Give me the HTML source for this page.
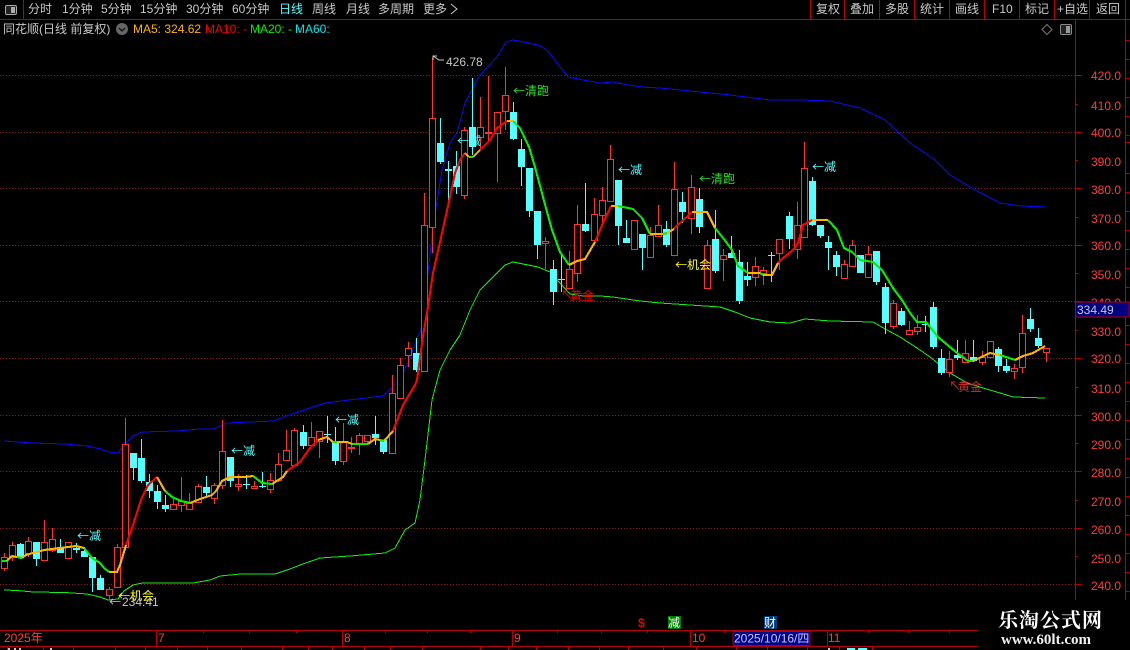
<!DOCTYPE html>
<html lang="zh">
<head>
<meta charset="utf-8">
<title>K线图</title>
<style>
html,body{margin:0;padding:0;background:#000;width:1130px;height:650px;overflow:hidden}
svg{display:block}
text{font-family:"Liberation Sans","WenQuanYi Zen Hei","Noto Sans CJK SC",sans-serif;font-size:12px}
.t{fill:#c8c8c8}
.a{fill:#ff3c3c}
.c{fill:#54ffff}
.g{fill:#2fe02f}
.y{fill:#ffff00}
.s text,text.s{font-family:"Noto Sans CJK SC","WenQuanYi Zen Hei",sans-serif}
</style>
</head>
<body>
<svg width="1130" height="650" viewBox="0 0 1130 650" xmlns="http://www.w3.org/2000/svg">
<rect width="1130" height="650" fill="#000"/>

<!-- grid -->
<path shape-rendering="crispEdges" stroke="#8c1818" stroke-dasharray="1 2" fill="none" d="M0 75.5H1075M0 132.5H1075M0 188.5H1075M0 245.5H1075M0 301.5H1075M0 358.5H1075M0 415.5H1075M0 471.5H1075M0 528.5H1075M0 584.5H1075"/>

<!-- frame lines -->
<path shape-rendering="crispEdges" stroke="#b80000" fill="none" d="M0 19.5H1130M23.5 0V19M810.5 0V19M844.5 0V19M879.5 0V19M914.5 0V19M949.5 0V19M984.5 0V19M1019.5 0V19M1054.5 0V19M1089.5 0V19M1125.5 0V19M1075.5 20V630M1125.5 20V630
M1075 75.5h6M1075 132.5h6M1075 188.5h6M1075 245.5h6M1075 301.5h6M1075 358.5h6M1075 415.5h6M1075 471.5h6M1075 528.5h6M1075 584.5h6
M1075 104.5h3M1075 160.5h3M1075 217.5h3M1075 273.5h3M1075 330.5h3M1075 387.5h3M1075 443.5h3M1075 500.5h3M1075 556.5h3
M1125 40.5h4M1125 59.5h4M1125 78.5h4M1125 97.5h4M1125 116.5h4M1125 135.5h4M1125 142.5h5M1125 173.5h4M1125 192.5h4M1125 211.5h4M1125 230.5h4M1125 249.5h4M1125 268.5h4M1125 287.5h4M1125 306.5h4M1125 325.5h4M1125 344.5h4M1125 363.5h4M1125 382.5h4M1125 401.5h4M1125 420.5h4M1125 439.5h4M1125 458.5h4M1125 477.5h4M1125 496.5h4M1125 515.5h4M1125 534.5h4M1125 553.5h4M1125 572.5h4M1125 591.5h4
M0 630.5H978M0 646.5H978M156.5 630V646M342.5 630V646M512.5 630V646M690.5 630V646M827.5 630V646
M203.5 630v3M249.5 630v3M296.5 630v3M385.5 630v3M427.5 630v3M470.5 630v3M557.5 630v3M601.5 630v3M647.5 630v3M724.5 630v3M868.5 630v3M908.5 630v3M949.5 630v3
M7.5 646v4M43.5 646v4M73.5 646v4M115.5 646v4M145.5 646v4M177.5 646v4M207.5 646v4M241.5 646v4M282.5 646v4M308.5 646v4M332.5 646v4M364.5 646v4M390.5 646v4M422.5 646v4M480.5 646v4M508.5 646v4M536.5 646v4M568.5 646v4M599.5 646v4M628.5 646v4M663.5 646v4M696.5 646v4M736.5 646v4M767.5 646v4M807.5 646v4M839.5 646v4M872.5 646v4"/>

<!-- bands -->
<polyline shape-rendering="crispEdges" fill="none" stroke="#0a0af0" points="4,441 17,442 33,443 65,444 87,446 100,449 108,452 118,453 124,445 133,436 142,432 177,431 200,429 213,429 227,423 273,421 295,413 325,403 357,399 383,396 400,380 410,358 417,338 421,330 428,273 433,227 442,170 450,143 457,133 465,103 480,75 497,57 506,42 513,40 523,42 538,45 547,50 557,63 568,77 583,80 600,83 613,82 640,87 660,88 690,91 730,95 770,100 800,100 830,101 860,108 885,120 910,143 935,160 950,175 975,190 1000,203 1020,206 1045,207"/>
<polyline shape-rendering="crispEdges" fill="none" stroke="#10f010" points="4,590 17,590.5 33,592 65,592.5 87,594 100,597 108,600 118,599 124,591 133,585 142,583 193,583 210,580 220,576 240,574 275,574 290,569 300,565 320,558 350,556 385,553 395,548 405,530 415,523 420,500 425,460 432,400 440,370 450,350 460,335 470,310 480,290 497,273 505,265 513,262 523,264 538,267 550,272 560,283 570,294 583,296 600,296 613,297 640,301 660,303 690,305 720,307 735,312 750,318 770,322 790,323 805,319 830,321 873,322 887,330 900,337 917,348 930,357 950,373 967,383 983,388 1000,393 1013,397 1045,398"/>

<!-- red candle wicks -->
<path shape-rendering="crispEdges" fill="none" stroke="#ff3232" d="M4.5 553V571M12.5 542V561M28.5 537V557M44.5 520V560M52.5 528V552M109.5 587V600M117.5 544V588M125.5 418V550M173.5 499V509M181.5 477V512M189.5 493V509M198.5 484V502M214.5 483V504M222.5 420V489M238.5 474V491M254.5 481V489M270.5 473V493M278.5 453V482M286.5 430V460M294.5 428V465M311.5 422V445M319.5 431V458M343.5 423V465M351.5 437V453M359.5 433V455M367.5 435V445M392.5 375V453M400.5 358V398M408.5 342V367M424.5 193V371M432.5 58V253M464.5 127V199M480.5 97V150M488.5 76V142M497.5 112V182M505.5 67V130M545.5 237V269M569.5 251V288M577.5 205V282M594.5 198V240M602.5 187V225M610.5 145V201M634.5 220V249M650.5 227V257M658.5 205V236M674.5 162V255M691.5 175V234M707.5 240V288M723.5 249V281M755.5 257V286M763.5 267V285M779.5 239V270M797.5 202V259M804.5 142V237M844.5 260V278M852.5 240V267M868.5 246V277M893.5 300V329M909.5 321V335M917.5 315V335M949.5 351V377M965.5 340V363M982.5 351V365M990.5 341V357M1014.5 364V379M1022.5 315V373M1046.5 348V362"/>

<!-- cyan candle wicks -->
<path shape-rendering="crispEdges" fill="none" stroke="#54ffff" d="M20.5 543V559M36.5 542V566M60.5 539V553M76.5 543V553M84.5 547V557M92.5 557V592M100.5 575V590M133.5 453V480M141.5 439V483M149.5 474V498M157.5 485V509M165.5 495V512M206.5 476V496M230.5 457V487M246.5 475V489M262.5 472V488M303.5 425V449M327.5 416V443M335.5 427V465M375.5 416V445M383.5 440V454M416.5 338V372M440.5 118V164M448.5 161V200M456.5 151V194M472.5 78V155M513.5 102V140M521.5 139V186M529.5 168V217M537.5 211V259M553.5 260V305M561.5 254V292M585.5 183V232M618.5 180V245M626.5 220V243M642.5 234V270M666.5 221V247M682.5 192V223M699.5 188V233M715.5 210V273M731.5 236V258M739.5 250V304M747.5 262V286M771.5 252V282M789.5 212V249M812.5 177V226M820.5 225V238M828.5 236V270M836.5 251V276M876.5 251V285M885.5 283V334M901.5 308V326M925.5 316V332M933.5 302V349M941.5 349V375M957.5 340V360M973.5 340V362M998.5 347V372M1006.5 359V373M1030.5 308V332M1038.5 328V348"/>

<!-- cyan bodies -->
<path shape-rendering="crispEdges" fill="#54ffff" d="M17 544h7v14h-7zM33 542h7v17h-7zM57 547h7v6h-7zM73 548h7v2h-7zM81 551h7v6h-7zM89 557h7v21h-7zM97 578h7v12h-7zM130 453h7v15h-7zM138 458h7v23h-7zM146 482h7v9h-7zM154 491h7v11h-7zM162 505h7v4h-7zM203 487h7v6h-7zM227 457h7v24h-7zM243 484h7v1h-7zM259 486h7v1h-7zM300 432h7v14h-7zM324 434h7v1h-7zM332 442h7v19h-7zM372 434h7v4h-7zM380 440h7v12h-7zM413 353h7v17h-7zM437 143h7v19h-7zM445 169h7v2h-7zM453 166h7v21h-7zM469 127h7v20h-7zM510 112h7v27h-7zM518 149h7v18h-7zM526 168h7v43h-7zM534 211h7v34h-7zM550 269h7v23h-7zM558 279h7v1h-7zM582 224h7v7h-7zM615 180h7v46h-7zM623 238h7v5h-7zM639 234h7v14h-7zM663 229h7v16h-7zM679 202h7v10h-7zM696 199h7v28h-7zM712 239h7v32h-7zM728 253h7v5h-7zM736 262h7v39h-7zM744 276h7v4h-7zM768 255h7v1h-7zM786 216h7v23h-7zM809 181h7v44h-7zM817 225h7v11h-7zM825 242h7v6h-7zM833 255h7v12h-7zM857 255h7v18h-7zM873 251h7v31h-7zM882 287h7v36h-7zM898 311h7v14h-7zM922 324h7v1h-7zM930 307h7v40h-7zM938 358h7v15h-7zM954 355h7v3h-7zM970 357h7v4h-7zM995 349h7v17h-7zM1003 366h7v5h-7zM1027 319h7v10h-7zM1035 338h7v8h-7z"/>

<!-- red bodies -->
<path shape-rendering="crispEdges" fill="#000" stroke="#ff3232" d="M1.5 557.5h6v11h-6zM9.5 545.5h6v12h-6zM25.5 541.5h6v12h-6zM41.5 542.5h6v18h-6zM49.5 539.5h6v11h-6zM65.5 542.5h6v16h-6zM106.5 589.5h6v6h-6zM114.5 547.5h6v40h-6zM122.5 444.5h6v103h-6zM170.5 504.5h6v5h-6zM178.5 501.5h6v4h-6zM186.5 503.5h6v6h-6zM195.5 486.5h6v16h-6zM211.5 485.5h6v13h-6zM219.5 451.5h6v34h-6zM235.5 484.5h6v2h-6zM251.5 486.5h6v2h-6zM267.5 480.5h6v9h-6zM275.5 464.5h6v16h-6zM283.5 450.5h6v10h-6zM291.5 430.5h6v35h-6zM308.5 437.5h6v8h-6zM316.5 431.5h6v10h-6zM340.5 442.5h6v19h-6zM348.5 447.5h6v1h-6zM356.5 435.5h6v9h-6zM364.5 435.5h6v6h-6zM389.5 393.5h6v60h-6zM397.5 365.5h6v33h-6zM405.5 348.5h6v7h-6zM421.5 225.5h6v146h-6zM429.5 118.5h6v109h-6zM461.5 130.5h6v65h-6zM477.5 127.5h6v10h-6zM485.5 132.5h6v1h-6zM494.5 112.5h6v21h-6zM502.5 95.5h6v16h-6zM542.5 241.5h6v2h-6zM566.5 269.5h6v19h-6zM574.5 224.5h6v49h-6zM591.5 214.5h6v26h-6zM599.5 200.5h6v15h-6zM607.5 159.5h6v42h-6zM631.5 220.5h6v29h-6zM647.5 235.5h6v22h-6zM655.5 225.5h6v11h-6zM671.5 189.5h6v66h-6zM688.5 187.5h6v31h-6zM704.5 245.5h6v43h-6zM720.5 255.5h6v4h-6zM752.5 266.5h6v11h-6zM760.5 270.5h6v3h-6zM776.5 239.5h6v14h-6zM794.5 225.5h6v24h-6zM801.5 168.5h6v69h-6zM841.5 264.5h6v14h-6zM849.5 245.5h6v21h-6zM865.5 254.5h6v23h-6zM890.5 303.5h6v23h-6zM906.5 330.5h6v4h-6zM914.5 327.5h6v4h-6zM946.5 359.5h6v13h-6zM962.5 353.5h6v9h-6zM979.5 357.5h6v5h-6zM987.5 341.5h6v16h-6zM1011.5 368.5h6v3h-6zM1019.5 333.5h6v34h-6zM1043.5 348.5h6v4h-6z"/>

<!-- MA line -->
<path shape-rendering="crispEdges" fill="none" stroke="#ff0000" stroke-width="2.1" d="M126 545L133 525 141 500 148 485 157 477M287 471L300 462 310 448 318 440M393 431L403 405 415 385 417 380 421 350 424 330 428 307 433 273 442 233 450 197 455 173 460 160 465 153M480 150L490 140 497 128 507 121M595 242L603 223 611 206M674 229L680 223 692 212M778 263L782 259 793 250 798 243 803 225 812 220"/>
<path shape-rendering="crispEdges" fill="none" stroke="#00f000" stroke-width="2.1" d="M2 561H7M17 557L22 558M84 548L92 558 100 563 104 568 109 572M165 491L172 497 181 501 190 503M253 476L262 483 272 484M333 442H337M352 444H368M380 440L384 441M469 157H473M513 121L520 128 529 147 535 167 543 197 552 230 560 252 569 265M618 206L633 209 642 218 650 234M663 234L667 233M715 228L723 238 732 250 738 266 748 273M760 273L763 275M828 220L837 230 844 248 852 252 860 260 873 262 882 270 893 288 902 300 910 313 917 322 926 322 938 337 957 353 968 361 973 361M1000 355L1015 360"/>
<path shape-rendering="crispEdges" fill="none" stroke="#ffb400" stroke-width="2.1" d="M7 561L12 556 17 557M22 558L26 555 33 553 37 552 44 550 52 549 60 548 68 547 76 546 84 548M109 572H117L120 565 126 545M157 477L165 491M190 503L200 499 212 495 216 491 222 481 230 477 245 477 253 476M272 484L283 477 287 471M318 440L327 437 333 442M337 442H347L352 444M368 444L375 439 380 440M384 441L393 431M465 153L469 157M473 157L480 150M507 121H513M569 265L577 261 585 259 595 242M611 206H618M650 234H663M667 233L674 229M692 212H707L715 228M748 273H760M763 275H772L778 263M812 220H828M973 361L990 353 1000 355M1015 360L1023 356 1033 353 1045 346"/>

<!-- top bar -->
<g class="t">
<text x="28" y="13">分时</text>
<text x="62" y="13">1分钟</text>
<text x="101" y="13">5分钟</text>
<text x="140" y="13">15分钟</text>
<text x="186" y="13">30分钟</text>
<text x="232" y="13">60分钟</text>
<text x="279" y="13" style="fill:#54ffff">日线</text>
<text x="312" y="13">周线</text>
<text x="346" y="13">月线</text>
<text x="378" y="13">多周期</text>
<text x="423" y="13">更多</text>
<text x="816" y="13">复权</text>
<text x="850" y="13">叠加</text>
<text x="885" y="13">多股</text>
<text x="920" y="13">统计</text>
<text x="955" y="13">画线</text>
<text x="992" y="13">F10</text>
<text x="1025" y="13">标记</text>
<text x="1057" y="13">+自选</text>
<text x="1096" y="13">返回</text>
<text x="3" y="33">同花顺(日线 前复权)</text>
</g>
<path fill="none" stroke="#c8c8c8" d="M451 4l6 5-6 5"/>
<rect x="5.5" y="5.5" width="11" height="9" rx="1.5" fill="#222" stroke="#aaa"/>
<rect x="11" y="7" width="4" height="6" fill="#aaa"/>
<rect x="1060.5" y="24.5" width="11" height="10" rx="1.5" fill="#222" stroke="#888"/>
<rect x="1066" y="26" width="4" height="7" fill="#999"/>
<path fill="none" stroke="#777" d="M1047 24.5l5 5-5 5-5-5z"/>
<circle cx="122" cy="29" r="6" fill="#666"/>
<path fill="none" stroke="#111" stroke-width="1.3" d="M119 28l3 3 3-3"/>
<text x="133" y="33" style="fill:#ffb400">MA5: 324.62</text>
<text x="205" y="33" style="fill:#f00000">MA10: -</text>
<text x="250" y="33" style="fill:#00f000">MA20: -</text>
<text x="295" y="33" style="fill:#00e8e8">MA60:</text>

<!-- axis labels -->
<g class="a">
<text x="1091" y="80">420.0</text>
<text x="1091" y="110">410.0</text>
<text x="1091" y="137">400.0</text>
<text x="1091" y="166">390.0</text>
<text x="1091" y="194">380.0</text>
<text x="1091" y="223">370.0</text>
<text x="1091" y="250">360.0</text>
<text x="1091" y="279">350.0</text>
<text x="1091" y="307">340.0</text>
<text x="1091" y="336">330.0</text>
<text x="1091" y="363">320.0</text>
<text x="1091" y="393">310.0</text>
<text x="1091" y="421">300.0</text>
<text x="1091" y="449">290.0</text>
<text x="1091" y="477">280.0</text>
<text x="1091" y="506">270.0</text>
<text x="1091" y="534">260.0</text>
<text x="1091" y="563">250.0</text>
<text x="1091" y="590">240.0</text>
</g>
<rect x="1075.5" y="302" width="53.5" height="15" fill="#000080" stroke="#b80000" shape-rendering="crispEdges"/>
<text x="1077" y="314" style="fill:#c8c8e0">334.49</text>

<!-- chart signal labels -->
<g class="c s">
<text x="77" y="540">←减</text>
<text x="231" y="455">←减</text>
<text x="335" y="424">←减</text>
<text x="457" y="145">←减</text>
<text x="618" y="174">←减</text>
<text x="812" y="171">←减</text>
</g>
<g class="g s">
<text x="513" y="95">←清跑</text>
<text x="699" y="183">←清跑</text>
</g>
<g class="y s">
<text x="118" y="600">←机会</text>
<text x="675" y="269">←机会</text>
</g>
<text x="561" y="299" style="fill:#f00000">↖</text>
<text x="570" y="300" style="fill:#f00000">黄金</text>
<text x="949" y="390" style="fill:#d03030">↖</text>
<text x="958" y="391" style="fill:#d03030">黄金</text>
<path fill="none" stroke="#c8c8c8" d="M433 60v-4h4M433 56l6 4h5"/>
<text x="446" y="66" class="t">426.78</text>
<text x="109" y="606" class="t s">←</text>
<text x="122" y="606" class="t">234.41</text>

<!-- markers -->
<text x="638" y="627" style="fill:#f00000;font-weight:bold">$</text>
<rect x="668" y="616" width="13" height="13" fill="#008000"/>
<text x="668" y="627" style="fill:#fff">减</text>
<rect x="764" y="616" width="13" height="13" fill="#004080"/>
<text x="764" y="627" style="fill:#fff">财</text>

<!-- time axis -->
<g class="a">
<text x="4" y="642">2025年</text>
<text x="158" y="642">7</text>
<text x="344" y="642">8</text>
<text x="514" y="642">9</text>
<text x="692" y="642">10</text>
<text x="828" y="642">11</text>
</g>
<rect x="733" y="631.5" width="77" height="14" fill="#00008b" stroke="#b80000" shape-rendering="crispEdges"/>
<text x="734" y="642.5" style="fill:#c8c8ff">2025/10/16/四</text>

<!-- clipped bottom row text -->
<path shape-rendering="crispEdges" fill="#c8c8c8" d="M8 648h2v2H8zM14 648h2v2h-2zM19 648h2v2h-2zM50 648h2v2h-2zM828 648h2v2h-2z"/>
<path shape-rendering="crispEdges" fill="#54ffff" d="M847 648h8v2h-8zM858 648h9v2h-9z"/>

<!-- watermark -->
<rect x="978" y="600" width="152" height="50" fill="#000"/>
<text x="998" y="627" style="font-family:'Noto Serif CJK SC','Liberation Serif',serif;font-size:20px;font-weight:bold;fill:#fff;letter-spacing:1px">乐淘公式网</text>
<text x="1001" y="644" style="font-family:'Liberation Serif',serif;font-size:15px;font-weight:bold;fill:#f0f0f0">www.60lt.com</text>
</svg>
</body>
</html>
